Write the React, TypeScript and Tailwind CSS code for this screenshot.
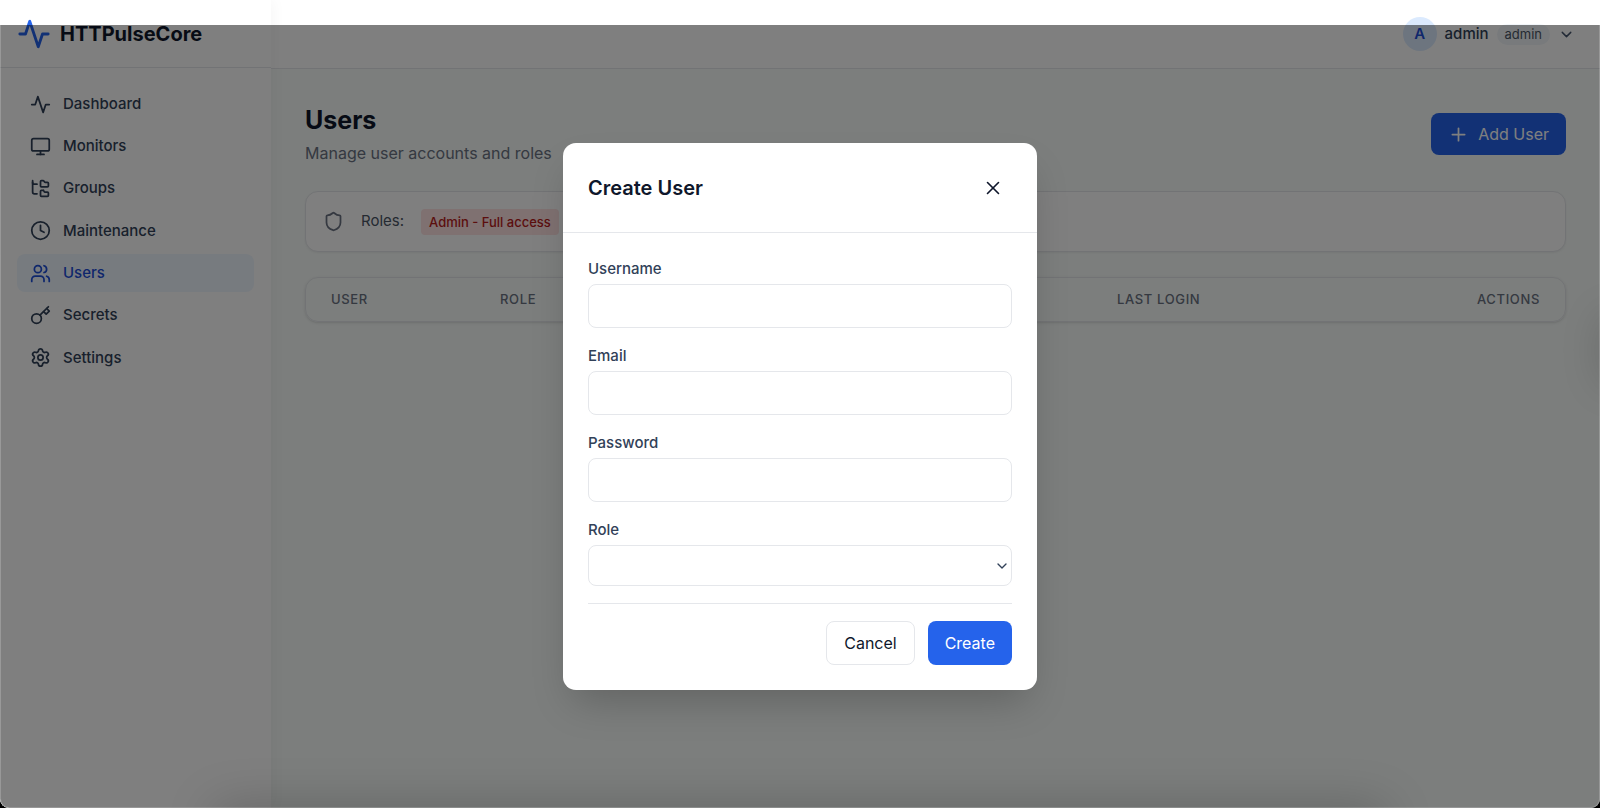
import React, { useState } from 'react';
import { Monitor, FolderTree, Clock, Users, Settings, Shield, Plus, X, ChevronDown } from 'lucide-react';

function PulseIcon({ className }: { className?: string }) {
  return (
    <svg className={className} viewBox="0 0 24 24" fill="none" stroke="currentColor" strokeWidth="2" strokeLinecap="round" strokeLinejoin="round">
      <path d="M22 12h-4l-3 9L9 3l-3 9H2" />
    </svg>
  );
}

function KeyIcon({ className }: { className?: string }) {
  return (
    <svg className={className} viewBox="0 0 24 24" fill="none" stroke="currentColor" strokeWidth="2" strokeLinecap="round" strokeLinejoin="round">
      <circle cx="7.5" cy="15.5" r="5.5" />
      <path d="m21 2-9.6 9.6" />
      <path d="m15.5 7.5 3 3L22 7l-3-3" />
    </svg>
  );
}

const navItems = [
  { name: 'Dashboard', icon: PulseIcon },
  { name: 'Monitors', icon: Monitor },
  { name: 'Groups', icon: FolderTree },
  { name: 'Maintenance', icon: Clock },
  { name: 'Users', icon: Users },
  { name: 'Secrets', icon: KeyIcon },
  { name: 'Settings', icon: Settings },
];

const textFields = [
  { id: 'username', label: 'Username', type: 'text' },
  { id: 'email', label: 'Email', type: 'email' },
  { id: 'password', label: 'Password', type: 'password' },
];

function Sidebar() {
  return (
    <aside className="relative z-10 w-[271px] shrink-0 bg-white shadow-[2px_0_14px_rgba(0,0,0,0.04)]">
      <div className="flex h-[68px] items-center gap-[9px] border-b border-gray-200 px-[17px]">
        <PulseIcon className="size-[34px] text-[#2563eb]" />
        <span className="text-[20px] font-bold text-slate-900">HTTPulseCore</span>
      </div>
      <nav className="flex h-[326px] flex-col justify-between px-[17px] py-[17px]">
        {navItems.map(({ name, icon: Icon }) => (
          <a
            key={name}
            href="#"
            className={
              name === 'Users'
                ? 'flex h-[38px] items-center gap-[12px] rounded-lg bg-[#eff6ff] px-[13px] text-[15px] font-medium text-[#1d4ed8]'
                : 'flex h-[38px] items-center gap-[12px] rounded-lg px-[13px] text-[15px] font-medium text-slate-700'
            }
          >
            <Icon className="size-[21px]" />
            {name}
          </a>
        ))}
      </nav>
    </aside>
  );
}

function Header() {
  return (
    <header className="flex h-[69px] items-center justify-end border-b border-gray-200 bg-white px-[25px]">
      <button className="flex items-center gap-[8px]">
        <span className="flex size-[34px] items-center justify-center rounded-full bg-[#dbeafe] text-[15px] font-semibold text-[#1d4ed8]">A</span>
        <span className="text-[15px] font-medium text-slate-700">admin</span>
        <span className="rounded-full bg-slate-100 px-[8px] text-[13px] leading-[21px] text-gray-600">admin</span>
        <ChevronDown className="size-[17px] text-slate-600" />
      </button>
    </header>
  );
}

function CreateUserModal({ onClose }: { onClose: () => void }) {
  return (
    <div className="w-[474px] rounded-[13px] bg-white shadow-[0_20px_40px_-10px_rgba(0,0,0,0.22)]" role="dialog" aria-labelledby="modal-title">
      <div className="flex items-center justify-between border-b border-gray-200 p-[25px]">
        <h2 id="modal-title" className="text-[20px] font-semibold text-slate-900">Create User</h2>
        <button onClick={onClose} aria-label="Close" className="flex size-[39px] items-center justify-center rounded-lg text-slate-900">
          <X className="size-[22px]" strokeWidth={1.75} />
        </button>
      </div>
      <form className="flex flex-col gap-[17px] p-[25px]" onSubmit={(e) => e.preventDefault()}>
        {textFields.map((f) => (
          <div key={f.id} className="flex flex-col gap-[5px]">
            <label htmlFor={f.id} className="text-[15px] leading-[21px] font-medium text-slate-700">{f.label}</label>
            <input id={f.id} type={f.type} className="h-[44px] w-full rounded-lg border border-gray-200 px-[13px] text-[16px] outline-none" />
          </div>
        ))}
        <div className="flex flex-col gap-[5px]">
          <label htmlFor="role" className="text-[15px] leading-[21px] font-medium text-slate-700">Role</label>
          <div className="relative">
            <select id="role" defaultValue="" className="block h-[41px] w-full appearance-none rounded-lg border border-gray-200 bg-white px-[13px] text-[16px] outline-none">
              <option value=""></option>
            </select>
            <ChevronDown className="pointer-events-none absolute inset-y-0 right-[2px] my-auto size-[16px] text-slate-700" />
          </div>
        </div>
        <div className="flex justify-end gap-[13px] border-t border-gray-200 pt-[17px]">
          <button type="button" onClick={onClose} className="h-[44px] rounded-lg border border-gray-200 px-[17px] text-[16px] text-slate-900">Cancel</button>
          <button type="submit" className="h-[44px] rounded-lg bg-[#2563eb] px-[17px] text-[16px] text-white">Create</button>
        </div>
      </form>
    </div>
  );
}

export default function App() {
  const [open, setOpen] = useState(true);

  return (
    <div className="bg-black font-['Inter',sans-serif]">
      <div className="relative flex min-h-screen overflow-hidden rounded-b-[9px] bg-[#f8fcfa]">
        <Sidebar />
        <div className="min-w-0 flex-1">
          <Header />
          <main className="flex flex-col gap-[25px] px-[34px] pt-[33px]">
            <div className="flex items-center justify-between">
              <div>
                <h1 className="text-[25px] leading-[37px] font-bold text-slate-900">Users</h1>
                <p className="mt-[2px] text-[16px] leading-[25px] text-gray-500">Manage user accounts and roles</p>
              </div>
              <button onClick={() => setOpen(true)} className="flex h-[42px] items-center gap-[9px] rounded-lg bg-[#2563eb] px-[17px] text-[16px] text-white">
                <Plus className="size-[21px]" />
                Add User
              </button>
            </div>

            <div className="flex h-[61px] items-center gap-[17px] rounded-[13px] border border-gray-200 bg-white px-[17px] shadow-xs">
              <Shield className="size-[21px] text-gray-500" />
              <span className="text-[15px] text-gray-600">Roles:</span>
              <span className="rounded bg-[#fee2e2] px-[8px] text-[13px] leading-[26px] font-medium text-[#b91c1c]">Admin - Full access</span>
            </div>

            <div className="overflow-hidden rounded-[13px] border border-gray-200 shadow-sm">
              <table className="w-full table-fixed">
                <thead>
                  <tr className="text-left text-[13px] leading-[17px] tracking-wider text-gray-500 uppercase">
                    <th className="w-[169px] px-[25px] py-[13px] font-medium">User</th>
                    <th className="w-[49%] px-[25px] py-[13px] font-medium">Role</th>
                    <th className="px-[25px] py-[13px] font-medium">Last Login</th>
                    <th className="px-[25px] py-[13px] text-right font-medium">Actions</th>
                  </tr>
                </thead>
                <tbody></tbody>
              </table>
            </div>
          </main>
        </div>

        {open && (
          <div className="absolute inset-x-0 top-[25px] bottom-0 z-20 flex items-center justify-center overflow-hidden rounded-b-[9px] bg-black/50">
            <CreateUserModal onClose={() => setOpen(false)} />
            {/* soft shading along the window edges */}
            <div className="pointer-events-none absolute top-full right-[215px] left-[215px] h-[40px] shadow-[0_0_50px_rgba(0,0,0,0.22)]" />
            <div className="pointer-events-none absolute top-[290px] left-full h-[70px] w-[40px] shadow-[0_0_40px_rgba(0,0,0,0.14)]" />
            <div className="pointer-events-none absolute inset-0 rounded-b-[9px] border border-t-0 border-white/20" />
          </div>
        )}
      </div>
    </div>
  );
}
